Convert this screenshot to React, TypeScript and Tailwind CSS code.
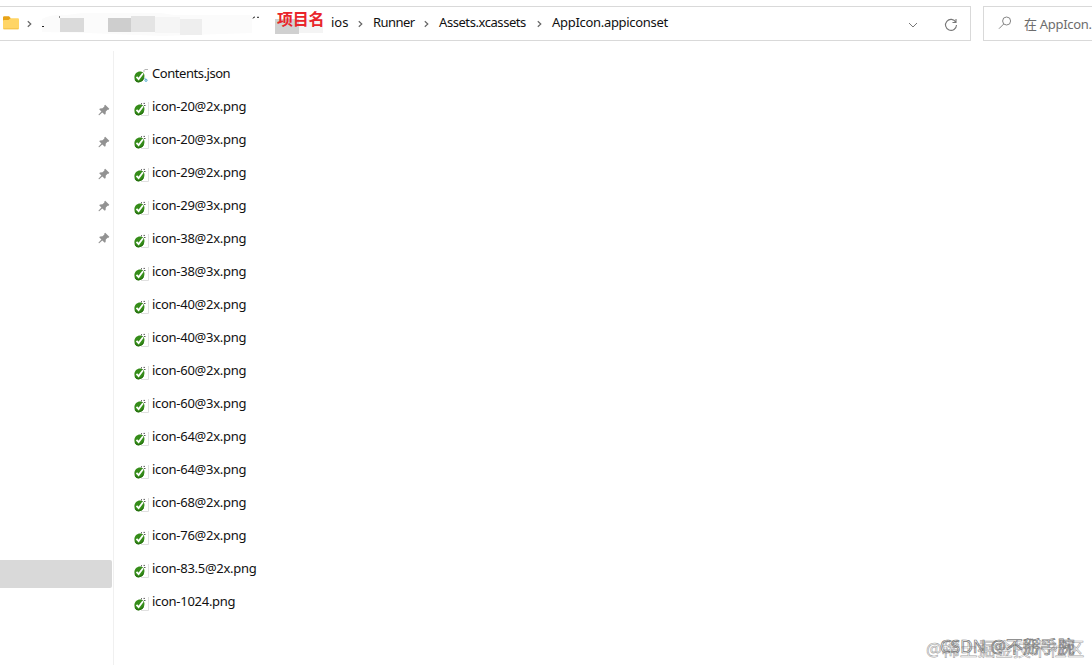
import { Fragment } from "react";

const crumbs = [
  { label: "ios", style: "w-[18px]" },
  { label: "Runner", style: "w-[42px] tracking-[-0.55px]" },
  { label: "Assets.xcassets", style: "w-[89px] tracking-[-0.43px]" },
  { label: "AppIcon.appiconset", style: "w-[117px] tracking-[-0.3px]" },
];

const files = [
  "Contents.json",
  "icon-20@2x.png",
  "icon-20@3x.png",
  "icon-29@2x.png",
  "icon-29@3x.png",
  "icon-38@2x.png",
  "icon-38@3x.png",
  "icon-40@2x.png",
  "icon-40@3x.png",
  "icon-60@2x.png",
  "icon-60@3x.png",
  "icon-64@2x.png",
  "icon-64@3x.png",
  "icon-68@2x.png",
  "icon-76@2x.png",
  "icon-83.5@2x.png",
  "icon-1024.png",
];

function FolderIcon() {
  return (
    <svg width="16" height="14" viewBox="0 0 16 14" className="shrink-0">
      <path d="M0 1.5Q0 .2 1.2.2H6L8 2.4 6 5H0Z" fill="#e8a317" />
      <path d="M0 5.2Q0 4 1 4H5.5L7.5 2.3H15Q16 2.3 16 3.4V12Q16 13.2 15 13.2H1Q0 13.2 0 12Z" fill="#ffd566" />
      <path d="M.5 12.8H15.5" stroke="#efb938" strokeWidth=".7" />
    </svg>
  );
}

function Chevron() {
  return (
    <svg width="5" height="8" viewBox="0 0 5 8" className="shrink-0" fill="none">
      <path d="M.8 1.2 3.8 4 .8 6.8" stroke="#666" strokeWidth="1.2" />
    </svg>
  );
}

function Pin() {
  return (
    <svg width="12" height="12" viewBox="0 0 12 12" className="shrink-0">
      <path d="M7.2.7 11.3 4.7 10.6 5.7 9.6 5.7 7.8 7.6 7.6 10.1 6.8 10.8 4.3 8.4 1.2 11.3.5 11 .6 10.4 3.4 7.5 1.2 5.2 2 4.4 4.5 4.2 6.4 2.4 6.3 1.4Z" fill="#929292" />
    </svg>
  );
}

function FileIcon({ json }: { json: boolean }) {
  return (
    <svg width="16" height="16" viewBox="0 0 16 16" className="shrink-0" fill="none">
      {json ? (
        <>
          <path d="M10 2V4M10.5 1.5H14" stroke="#b5b5b5" />
          <circle cx="12" cy="12.3" r="1.1" stroke="#3e9fc9" strokeWidth=".9" />
          <path d="M10.4 10.3h1" stroke="#3e9fc9" />
        </>
      ) : (
        <path d="M14.5 1V14.5H7" stroke="#e0e0e0" />
      )}
      <path d="M.4 9.2C.4 5.6 3 3.4 6 3.4 9 3.4 10.8 5.5 10.4 8.6 10 12 7.8 14.3 5 14.3 2.1 14.3.4 12 .4 9.2Z" fill="#358c19" />
      <path d="M1 11.4Q2.5 14.2 5.3 13.8 8 13.4 9.6 10.5" stroke="#26700f" strokeWidth="1.1" />
      <path d="M2.5 8.8 4.6 11 9 5.2" stroke="white" strokeWidth="1.8" />
      {!json && <path d="M7 2.8h1M9.6 2.4h1.2M10.2 4.5h1.2" stroke="#333" />}
    </svg>
  );
}

// Blurred-out parent folders, with the red label over them
function HiddenPath() {
  return (
    <div className="relative h-[33px] w-[289px] shrink-0">
      <svg width="289" height="33" viewBox="0 0 289 33" className="block">
        <path d="M0 12Q10 7 25 8L40 6H119L132 8H210V26L120 29 45 26 0 25Z" fill="#fbfbfb" />
        <path d="M18 11H42V25H18Z" fill="#dadada" />
        <path d="M66 11H89V25H66Z" fill="#cecece" />
        <path d="M89 9H113V25H89Z" fill="#e4e4e4" />
        <path d="M113 10H138V26H113Z" fill="#f5f5f5" />
        <path d="M138 12H160V28H138Z" fill="#eee" />
        <path d="M233 12H257V27H233Z" fill="#d0d0d0" />
        <path d="M257 12H281V26H257Z" fill="#f4f4f4" />
        <path d="M0 19.5h2M17 10h1" stroke="#222" />
        <path d="M211 11.5Q211 10 213 10M215 10.3h2" stroke="#222" fill="none" />
      </svg>
      <span className="absolute top-[1px] left-[235px] text-[16px] leading-[22px] font-bold tracking-[-0.3px] whitespace-nowrap text-[#e9252b]">
        项目名
      </span>
    </div>
  );
}

function TopBar() {
  return (
    <header className="flex h-[41px] w-full shrink-0 pt-[6px]">
      <div className="flex h-[35px] w-[971px] shrink-0 items-center border border-l-0 border-[#d9d9d9] pl-[3px]">
        <span className="pb-px">
          <FolderIcon />
        </span>
        <div className="ml-2 flex">
          <Chevron />
        </div>
        <div className="ml-[10px] flex items-center">
          <HiddenPath />
          {crumbs.map((crumb, i) => (
            <Fragment key={crumb.label}>
              {i > 0 && (
                <span className="mr-[10px] ml-[9px] flex w-[5px]">
                  <Chevron />
                </span>
              )}
              <span className={`${crumb.style} shrink-0 pb-[3px] whitespace-nowrap`}>{crumb.label}</span>
            </Fragment>
          ))}
        </div>
        <svg width="10" height="6" viewBox="0 0 10 6" fill="none" className="mt-[3px] ml-auto">
          <path d="M1 1 5 5 9 1" stroke="#777" />
        </svg>
        <svg width="14" height="14" viewBox="0 0 14 14" fill="none" className="mt-[3px] mr-[12px] ml-[26px]">
          <path d="M11.8 4.2A5.5 5.5 0 1 0 12.5 7M12 1V4.5H8.5" stroke="#777" strokeWidth="1.1" />
        </svg>
      </div>
      <div className="ml-3 flex h-[35px] flex-1 items-center overflow-hidden border border-r-0 border-[#d9d9d9] pl-[14px] text-[#6d6d6d]">
        <svg width="14" height="14" viewBox="0 0 14 14" fill="none" className="mb-px shrink-0">
          <circle cx="8.6" cy="5" r="4" stroke="#858585" />
          <path d="M5.7 8 1 12.7" stroke="#858585" />
        </svg>
        <span className="ml-3 tracking-[-0.3px] whitespace-nowrap">在 AppIcon.</span>
      </div>
    </header>
  );
}

function Sidebar() {
  return (
    <aside className="flex w-[112px] shrink-0 flex-col">
      <div className="mt-[53px] flex flex-col gap-5 pl-[98px]">
        {[0, 1, 2, 3, 4].map((n) => (
          <Pin key={n} />
        ))}
      </div>
      <div className="mt-[316px] h-7 rounded-r-xs bg-[#d9d9d9]" />
    </aside>
  );
}

export default function App() {
  return (
    <div className="relative flex h-[665px] w-[1092px] flex-col overflow-hidden bg-white font-['Noto_Sans','Noto_Sans_CJK_SC',sans-serif] text-[13px] leading-5 text-[#111]">
      <TopBar />
      <main className="flex flex-1 pt-[10px]">
        <Sidebar />
        <div className="ml-px w-px bg-[#f0f0f0]" />
        <ul className="ml-5 pt-[6px]">
          {files.map((file) => {
            const json = file.endsWith(".json");
            return (
              <li key={file} className="flex h-[33px] items-center gap-[2px]">
                <span className="pt-1">
                  <FileIcon json={json} />
                </span>
                <span
                  className={`pb-[2px] whitespace-nowrap ${json ? "tracking-[-0.45px]" : "tracking-[-0.28px]"}`}
                >
                  {file}
                </span>
              </li>
            );
          })}
        </ul>
      </main>
      {/* watermarks, one stamped over the other */}
      <div className="absolute top-[638px] left-[926px] text-[17.8px] leading-[22px] whitespace-nowrap text-transparent [-webkit-text-stroke:0.6px_#a4a4a4]">
        @稀土掘金技术社区
      </div>
      <div className="absolute top-[636px] left-[940px] text-[17.2px] leading-[22px] whitespace-nowrap text-transparent [-webkit-text-stroke:0.7px_#777]">
        CSDN @不掰手腕
      </div>
    </div>
  );
}
